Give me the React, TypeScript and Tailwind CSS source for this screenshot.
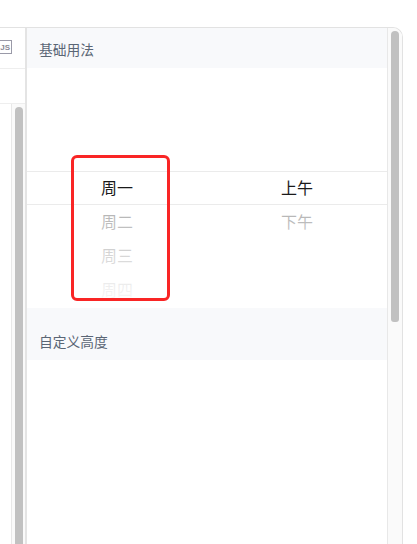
import { useMemo } from 'react';

const days = ['周一', '周二', '周三', '周四'];
const periods = ['上午', '下午'];

function Scrollbar({ thumb, className }: { thumb: string; className: string }) {
  return (
    <div className={`shrink-0 bg-[#fafafa] ${className}`}>
      <div className={`w-[8px] mx-auto rounded-t-[4px] rounded-b-[3px] bg-[#c1c1c1] ${thumb}`} />
    </div>
  );
}

function PickerColumn({ items }: { items: string[] }) {
  return (
    <div className="flex-1 flex flex-col items-center">
      {items.map(item => (
        <div key={item} className="h-[34px] leading-[34px] text-[16px] text-[#1a1a1a]">{item}</div>
      ))}
    </div>
  );
}

export default function App() {
  const columns = useMemo(() => [days, periods], []);

  return (
    <div className="relative w-[417px] h-[544px] overflow-hidden bg-white pt-[27px] font-['Noto_Sans_CJK_SC','Liberation_Sans',sans-serif]">
      <div className="flex w-[403px] h-[517px] border-t border-r border-[#e2e2e2] rounded-tr-[10px] overflow-hidden">
        <div className="w-[27px] shrink-0 border-r-2 border-[#e4e4e4] flex flex-col">
          <div className="h-[41px] shrink-0 border-b border-[#eeeeee] flex items-center justify-end pr-[13px] pb-[2px]">
            <div className="w-[14px] h-[14px] shrink-0 border border-[#9a9aa8] flex items-end justify-end pr-[1px] text-[8px] leading-[11px] font-bold text-[#8a8a96] font-['Liberation_Sans',sans-serif]">
              JS
            </div>
          </div>
          <div className="h-[35px] shrink-0 border-b border-[#eeeeee]" />
          <div className="flex-1 flex justify-end">
            <Scrollbar thumb="h-[440px] mt-[3px]" className="w-[14px] border-l border-[#e8e8e8]" />
          </div>
        </div>

        <div className="flex-1 min-w-0">
          <div className="h-[40px] bg-[#f8f9fb] pl-[12px] pt-[9px] text-[13.75px] leading-[24px] text-[#5a6675]">基础用法</div>
          <div className="relative h-[240px] overflow-hidden">
            <div className="pt-[102px] flex">
              {columns.map(col => (
                <PickerColumn key={col[0]} items={col} />
              ))}
            </div>
            <div className="absolute left-0 right-0 top-[103px] h-[34px] border-y border-[#ebebeb]" />
            <div className="absolute left-0 right-0 top-0 h-[103px] bg-gradient-to-b from-white/90 to-white/40" />
            <div className="absolute left-0 right-0 bottom-0 h-[103px] bg-gradient-to-b from-white/65 to-white/100" />
          </div>
          <div className="h-[52px] bg-[#f8f9fb] pl-[12px] pt-[21px] text-[13.75px] leading-[24px] text-[#5a6675]">自定义高度</div>
        </div>

        <Scrollbar thumb="h-[291px] mt-[3px]" className="w-[15px] border-l border-[#e8e8e8]" />
      </div>

      <div className="absolute left-[71px] top-[154.5px] w-[98.5px] h-[146px] border-[3px] border-[#f92525] rounded-[6px]" />
    </div>
  );
}
